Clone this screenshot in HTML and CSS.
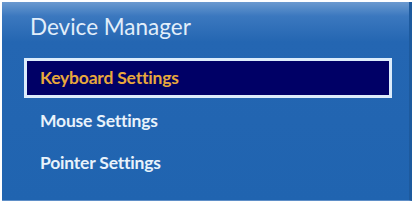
FILE: index.html
```html
<!DOCTYPE html>
<html lang="en">
<head>
    <meta charset="UTF-8">
    <title>Device Manager</title>
    <link rel="stylesheet" href="styles.css">
</head>
<body>
    <div class="panel">
        <div class="title">Device Manager</div>
        <ul class="menu">
            <li class="item active">Keyboard Settings</li>
            <li class="item">Mouse Settings</li>
            <li class="item">Pointer Settings</li>
        </ul>
    </div>
</body>
</html>
```

FILE: styles.css
```css
*{
    box-sizing: border-box;
}
body {
    margin: 0;
    background-color: #fff;
    font-family: Lato, "Open Sans", sans-serif;
}
.panel{
    margin: 2px 0 0 2px;
    width: 410px;
    height: 199px;
    background: linear-gradient(to bottom, #6b9ad0 0px, #3b78bf 14px, #2466b2 40px, #2064b0 100%);
    border-right: 3px solid #1d5a9e;
    border-bottom: 1px solid #5f8fc8;
    padding: 10px 17px 0 22px;
}
.title{
    color: #e2eefa;
    font-size: 22.5px;
    line-height: 30px;
    padding-left: 6px;
}
.menu{
    list-style: none;
    margin: 16px 0 0 0;
    padding: 0;
}
.item{
    color: #e8f2fb;
    font-size: 17.5px;
    font-weight: bold;
    height: 42px;
    line-height: 42px;
    padding-left: 16px;
    letter-spacing: -0.2px;
}
.active{
    height: 40px;
    line-height: 34px;
    background-color: #000066;
    color: #e8a83c;
    border: 3px solid #dcecfb;
    padding-left: 13px;
    margin-bottom: 2px;
}
```
